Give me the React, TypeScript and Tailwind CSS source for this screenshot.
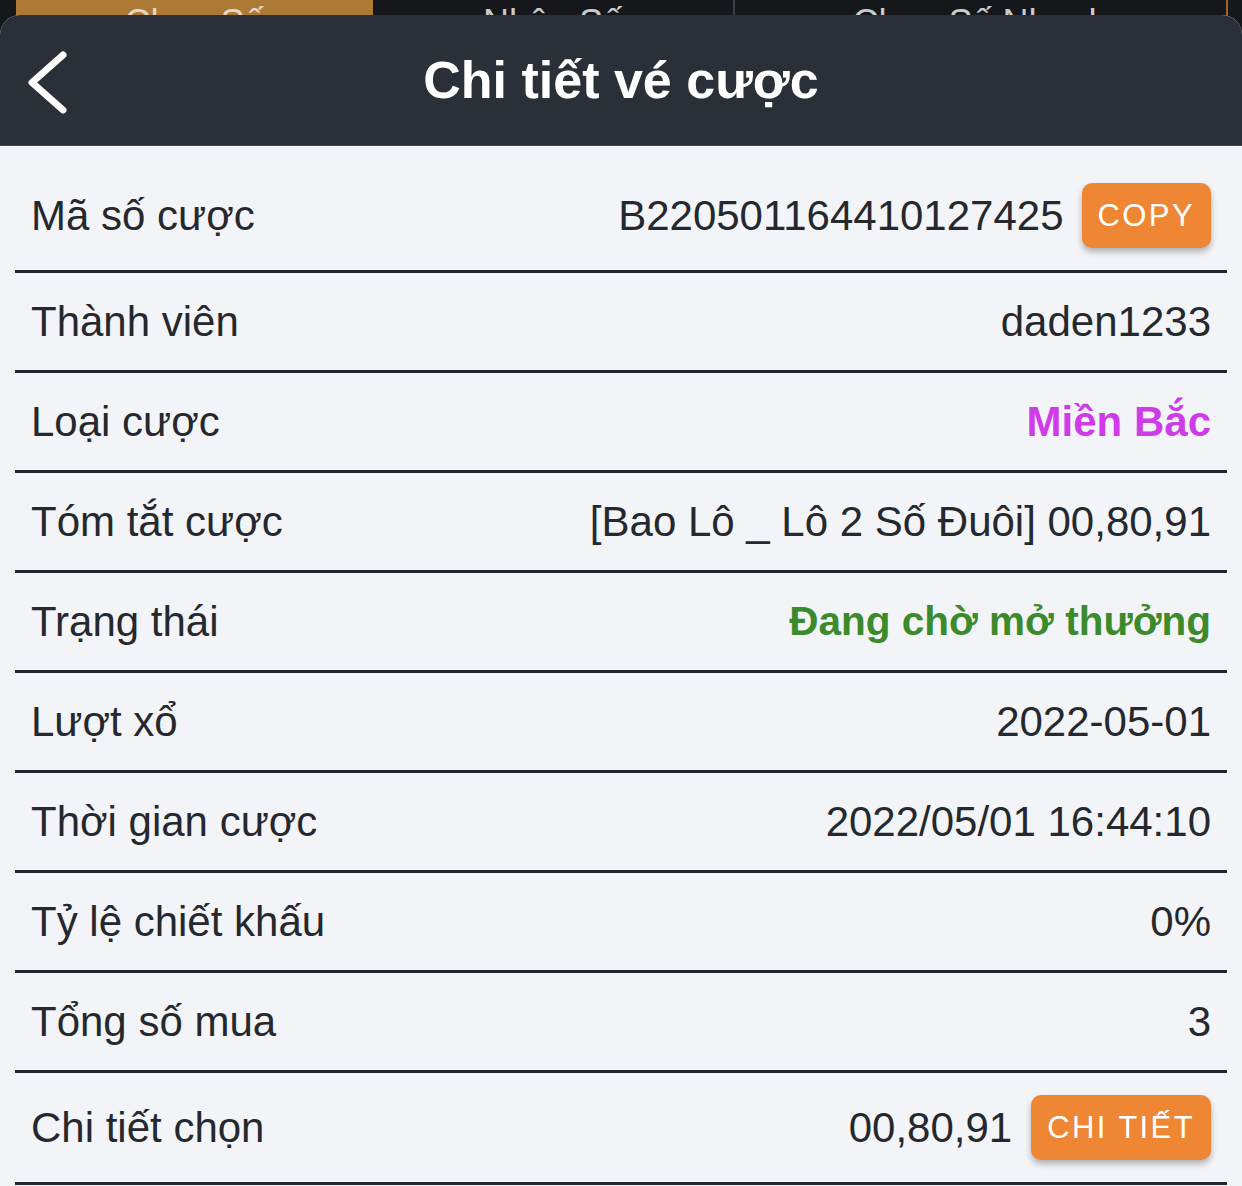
import React from "react";

const rows = [
  { label: "Thành viên", value: "daden1233" },
  { label: "Loại cược", value: "Miền Bắc", tone: "text-[42px] text-[#cf3be8] font-bold" },
  { label: "Tóm tắt cược", value: "[Bao Lô _ Lô 2 Số Đuôi] 00,80,91" },
  { label: "Trạng thái", value: "Đang chờ mở thưởng", tone: "text-[40.5px] text-[#3b8a2b] font-semibold" },
  { label: "Lượt xổ", value: "2022-05-01" },
  { label: "Thời gian cược", value: "2022/05/01 16:44:10" },
  { label: "Tỷ lệ chiết khấu", value: "0%" },
  { label: "Tổng số mua", value: "3" },
];

function OrangeButton({ children }: { children: React.ReactNode }) {
  return (
    <button className="h-[65px] px-[16px] rounded-[10px] bg-[#ef8633] text-white text-[31px] tracking-[2.4px] leading-none shadow-[0_4px_6px_rgba(0,0,0,0.28)]">
      {children}
    </button>
  );
}

export default function App() {
  return (
    <div
      className="min-h-screen bg-[#f3f4f8] text-[#25282d]"
      style={{ fontFamily: '"Liberation Sans", Arial, sans-serif' }}
    >
      {/* tab strip peeking out behind the sheet */}
      <div className="h-[60px] bg-[#15171b] flex pl-[16px] pr-[14px] overflow-hidden text-[36px] leading-none text-center">
        <div className="w-[357px] bg-[#ad7a35] text-[#e6d6c2] pt-[5px]">Chọn Số</div>
        <div className="w-[362px] border-r-2 border-[#3a3d42] text-[#c9cacc] pt-[5px]">Nhập Số</div>
        <div className="flex-1 border-r-2 border-[#a0622a] text-[#c9cacc] pt-[5px]">Chọn Số Nhanh</div>
      </div>

      <div className="relative -mt-[45px] rounded-t-[20px] overflow-hidden bg-[#f3f4f8]">
        <header className="relative h-[131px] bg-[#2b3038] border-b border-[#474c55] flex items-center justify-center">
          <svg
            className="absolute left-0 top-0"
            width="100"
            height="131"
            viewBox="0 0 100 131"
            fill="none"
          >
            <path
              d="M63 40 L32 67.5 L63 95"
              stroke="white"
              strokeWidth="7"
              strokeLinecap="round"
              strokeLinejoin="round"
            />
          </svg>
          <h1 className="text-white text-[52px] font-bold leading-none">
            Chi tiết vé cược
          </h1>
        </header>

        <div className="mx-[15px]">
          <div className="flex items-center justify-between px-[16px] pt-[37px] pb-[22px] border-b-[3px] border-[#23262b]">
            <span className="text-[42px]">Mã số cược</span>
            <div className="flex items-center gap-[18px]">
              <span className="text-[42px]">B220501164410127425</span>
              <OrangeButton>COPY</OrangeButton>
            </div>
          </div>

          {rows.map((r) => (
            <div
              key={r.label}
              className="h-[100px] flex items-center justify-between px-[16px] border-b-[3px] border-[#23262b]"
            >
              <span className="text-[42px]">{r.label}</span>
              <span className={r.tone ?? "text-[42px]"}>{r.value}</span>
            </div>
          ))}

          <div className="flex items-center justify-between px-[16px] pt-[22px] pb-[22px] border-b-[3px] border-[#23262b]">
            <span className="text-[42px]">Chi tiết chọn</span>
            <div className="flex items-center gap-[19px]">
              <span className="text-[42px]">00,80,91</span>
              <OrangeButton>CHI TIẾT</OrangeButton>
            </div>
          </div>
        </div>
      </div>
    </div>
  );
}
